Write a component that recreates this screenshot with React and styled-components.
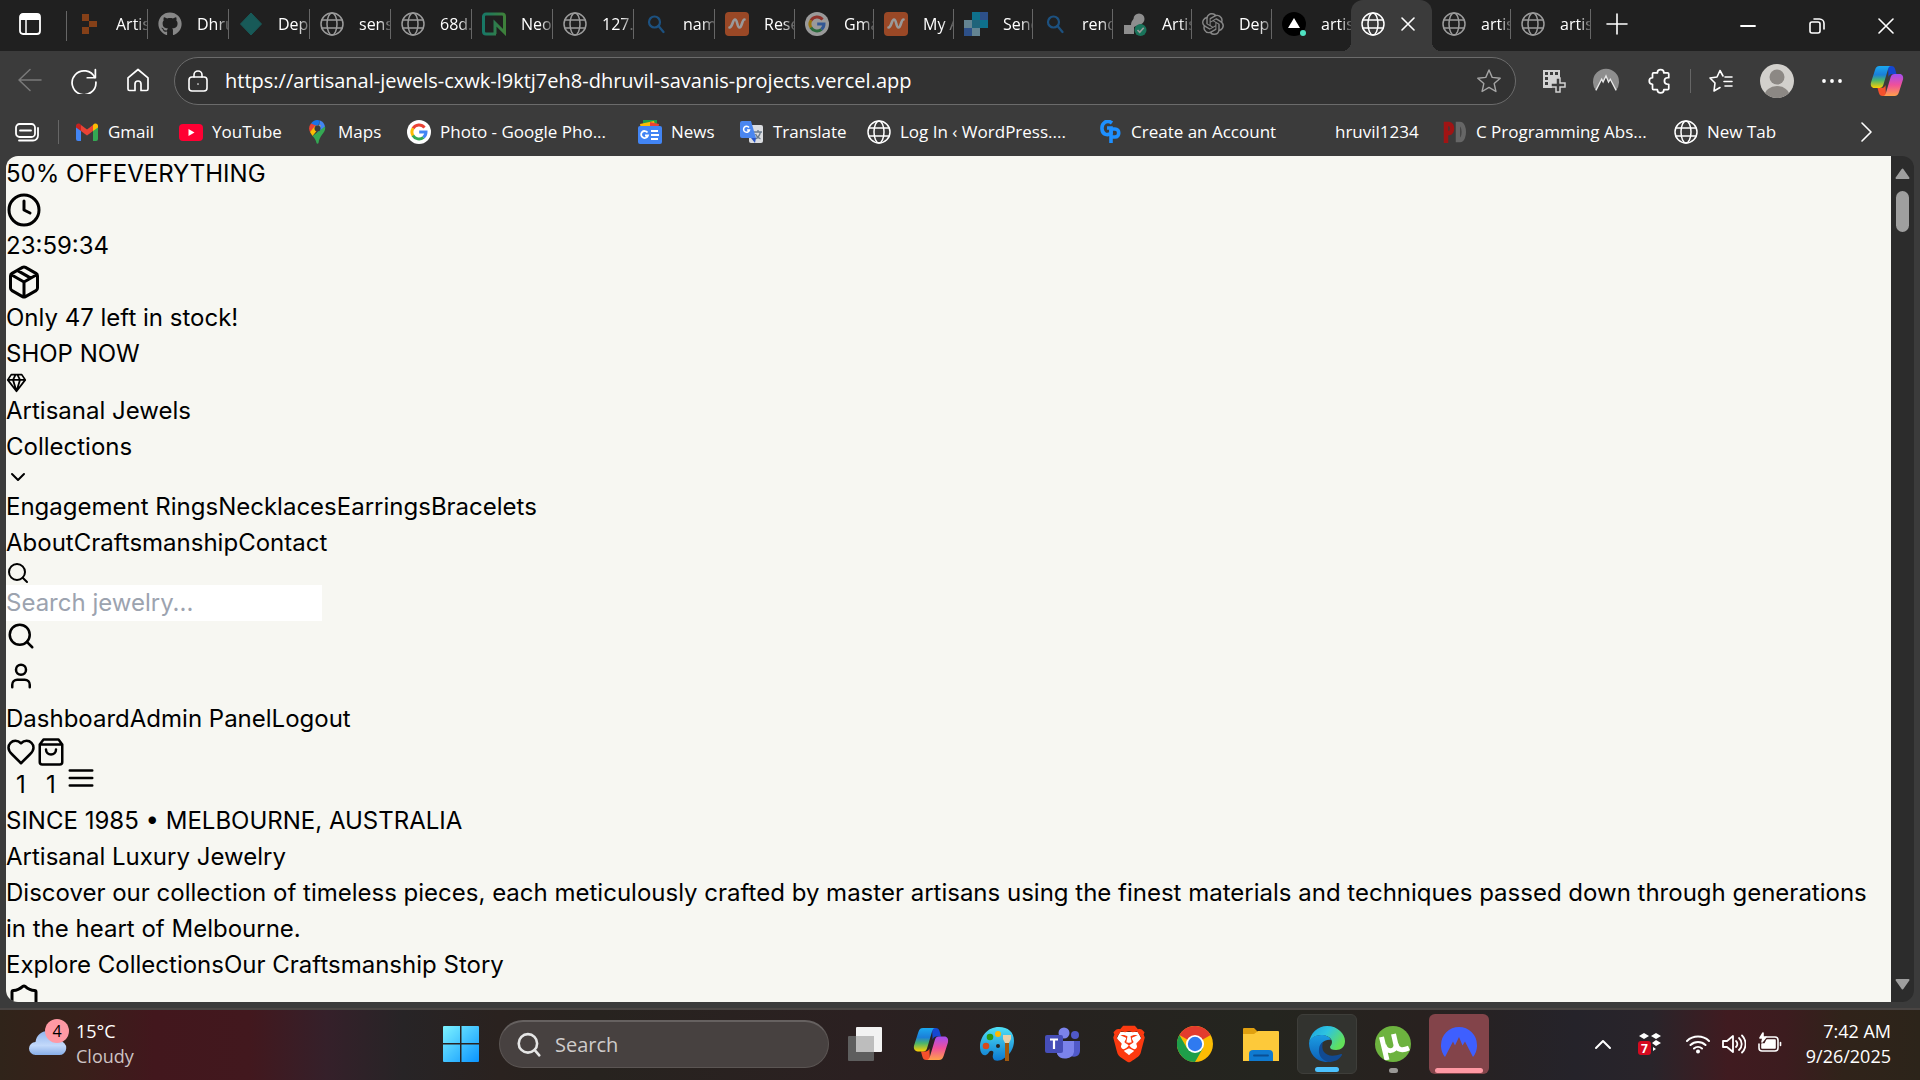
import React from 'react';
import styled, { createGlobalStyle, css } from 'styled-components';
import { FaGithub } from 'react-icons/fa';
import { SiOpenai, SiBrave } from 'react-icons/si';

const GlobalStyle = createGlobalStyle`
  *, *::before, *::after { box-sizing: border-box; }
  body { margin: 0; background: #3b3b3b; font-family: 'Open Sans', 'Noto Sans', sans-serif; }
  button, input { font: inherit; color: inherit; border: 0; padding: 0; margin: 0; background: none; }
  a { color: inherit; text-decoration: none; }
  p, h1 { margin: 0; font: inherit; }
  svg { display: block; flex: none; }
`;

/* ---------- layout ---------- */

const Desktop = styled.div`
  display: flex;
  flex-direction: column;
  height: 100vh;
  overflow: hidden;
`;

const BrowserWindow = styled.div`
  flex: 1;
  min-height: 0;
  display: flex;
  flex-direction: column;
  background: #3b3b3b;
  color: #fff;
`;

const TabBar = styled.div`
  display: flex;
  height: 51px;
  background: #202020;
`;

const TabActions = styled.button`
  width: 66px;
  display: flex;
  align-items: center;
  padding-left: 19px;
  padding-bottom: 3px;
`;

const Separator = styled.span`
  width: 1px;
  height: ${(p) => p.$h}px;
  background: #666;
  flex: none;
`;

const Tab = styled.div`
  width: ${(p) => p.$w}px;
  flex: none;
  display: flex;
  align-items: center;
  padding-left: 10px;
  padding-bottom: 3px;
  > svg { opacity: ${(p) => (p.$bright ? 1 : 0.55)}; }
`;

const TabTitle = styled.button`
  flex: 1;
  min-width: 0;
  height: 24px;
  margin-left: 15px;
  overflow: hidden;
  white-space: nowrap;
  text-align: left;
  font-size: 16px;
  line-height: 24px;
  -webkit-mask-image: linear-gradient(to right, #000 62%, rgba(0, 0, 0, 0.25) 100%);
  mask-image: linear-gradient(to right, #000 62%, rgba(0, 0, 0, 0.25) 100%);
`;

const ActiveTab = styled.div`
  position: relative;
  width: 81px;
  flex: none;
  display: flex;
  align-items: center;
  gap: 16px;
  padding: 0 0 3px 10px;
  background: #3b3b3b;
  border-radius: 12px 12px 0 0;
  &::before, &::after {
    content: '';
    position: absolute;
    bottom: 0;
    width: 9px;
    height: 9px;
  }
  &::before { left: -9px; background: radial-gradient(circle at 0 0, transparent 9px, #3b3b3b 9px); }
  &::after { right: -9px; background: radial-gradient(circle at 100% 0, transparent 9px, #3b3b3b 9px); }
`;

const NewTab = styled.button`
  display: flex;
  align-items: center;
  padding: 0 15px 3px;
`;

const WindowControls = styled.div`
  margin-left: auto;
  display: flex;
  button {
    width: 69px;
    display: flex;
    align-items: center;
    justify-content: center;
  }
`;

const Toolbar = styled.div`
  display: flex;
  align-items: center;
  height: 60px;
  padding: 0 16px 0 15px;
`;

const NavButtons = styled.div`
  display: flex;
  gap: 24px;
  padding-right: 21px;
  button { display: flex; width: 30px; justify-content: center; }
`;

const AddressBar = styled.div`
  flex: 1;
  display: flex;
  align-items: center;
  gap: 16px;
  height: 48px;
  padding: 0 14px 0 12px;
  border: 1px solid #6b6b6b;
  border-radius: 24px;
  background: #323232;
`;

const UrlInput = styled.input`
  flex: 1;
  min-width: 0;
  font-size: 20px;
  line-height: 28px;
  outline: none;
`;

const ToolbarIcons = styled.div`
  display: flex;
  align-items: center;
  gap: 27px;
  padding-left: 26px;
  button { display: flex; }
`;

const IconGroup = styled.div`
  display: flex;
  align-items: center;
  gap: ${(p) => p.$gap}px;
`;

const BookmarkBar = styled.nav`
  display: flex;
  align-items: center;
  height: 45px;
  padding: 0 44px 3px 14px;
  font-size: 17px;
  line-height: 24px;
`;

const Workspaces = styled.button`
  display: flex;
  width: 44px;
`;

const Bookmark = styled.a`
  display: flex;
  align-items: center;
  gap: 9px;
  width: ${(p) => p.$w}px;
  flex: none;
  white-space: nowrap;
`;

const BookmarkIcon = styled.span`
  width: 24px;
  display: flex;
  justify-content: center;
`;

const BookmarkList = styled.div`
  display: flex;
  margin-left: 16px;
`;

const MoreBookmarks = styled.button`
  margin-left: auto;
  display: flex;
`;

/* ---------- page ---------- */

const Viewport = styled.div`
  flex: 1;
  min-height: 0;
  display: flex;
  margin: 0 6px 6px;
  border-radius: 12px;
  overflow: hidden;
`;

const Page = styled.main`
  flex: 1;
  min-width: 0;
  overflow: hidden;
  background: #f7f7f2;
  color: #000;
  font-family: Inter, 'Liberation Sans', sans-serif;
  font-size: 24px;
  line-height: 36px;
`;

const IconRow = styled.div`
  display: flex;
  padding: 10px 0;
`;

const PlainButton = styled.button`
  display: block;
  cursor: pointer;
`;

const SearchInput = styled.input`
  display: block;
  width: 316px;
  height: 36px;
  background: #fff;
  outline: none;
  &::placeholder { color: #9ca3af; opacity: 1; }
`;

const CartRow = styled.div`
  display: flex;
  align-items: baseline;
`;

const CountButton = styled.button`
  width: 30px;
  text-align: center;
`;

const Scrollbar = styled.div`
  width: 23px;
  display: flex;
  flex-direction: column;
  align-items: center;
  padding: 12px 0;
  background: #2c2c2c;
`;

const Thumb = styled.div`
  width: 13px;
  height: 41px;
  margin: 12px 0 auto;
  border-radius: 7px;
  background: #9f9f9f;
`;

/* ---------- taskbar ---------- */

const Taskbar = styled.footer`
  display: grid;
  grid-template-columns: 1fr auto 1fr;
  align-items: center;
  height: 72px;
  padding-bottom: 2px;
  border-top: 2px solid #4a4543;
  color: #fff;
  font-size: 18px;
  line-height: 25px;
  background: linear-gradient(
    to right,
    #30241a 0%, #38201a 4%, #42171d 8%, #42181e 13%, #35202a 17%, #272426 21%, #2a221f 26%, #27231f 31%,
    #2b2021 45%, #26221f 55%, #24251f 66%, #28211f 74%, #25232a 82%, #29242a 86%, #401b20 90%, #3c1c1f 93%, #30231a 96%, #2c241a 100%
  );
`;

const Weather = styled.button`
  display: flex;
  align-items: center;
  gap: 8px;
  padding-left: 28px;
  text-align: left;
`;

const Muted = styled.div`
  color: #cdc3c4;
`;

const CloudWrap = styled.span`
  position: relative;
  display: block;
  width: 40px;
  height: 50px;
`;

const Badge = styled.span`
  position: absolute;
  top: 0;
  right: -1px;
  width: 24px;
  height: 24px;
  border-radius: 50%;
  background: #ff99a4;
  color: #000;
  font-size: 16px;
  line-height: 24px;
  text-align: center;
`;

const Dock = styled.div`
  display: flex;
  align-items: center;
  gap: 6px;
`;

const DockButton = styled.button`
  width: 60px;
  height: 60px;
  display: flex;
  flex-direction: column;
  align-items: center;
  justify-content: center;
  position: relative;
  border-radius: 6px;
  ${(p) => p.$state === 'active' && css`
    background: #32332f;
    border: 1px solid #3e3e3a;
  `}
  ${(p) => p.$state === 'alert' && css`background: #83444a;`}
`;

const Indicator = styled.span`
  position: absolute;
  bottom: 1px;
  width: ${(p) => p.$w}px;
  height: 5px;
  border-radius: 3px;
  background: ${(p) => p.$c};
`;

const SearchBox = styled.label`
  display: flex;
  align-items: center;
  gap: 13px;
  width: 330px;
  height: 48px;
  margin-left: 2px;
  padding: 0 16px;
  border: 1px solid #5b5553;
  border-top: 2px solid #666160;
  border-radius: 24px;
  background: #474140;
  font-size: 20px;
  input { width: 100%; outline: none; }
  input::placeholder { color: #cfcccb; opacity: 1; }
`;

const Tray = styled.div`
  display: flex;
  align-items: center;
  justify-content: flex-end;
  padding-right: 29px;
  > button { display: flex; }
`;

const TrayGroup = styled.button`
  gap: 12px;
  margin: 0 24px;
`;

const Clock = styled.time`
  text-align: right;
`;

/* ---------- icons ---------- */

const Line = ({ size = 24, w = 2, vb = 24, children, color = 'currentColor' }) => (
  <svg width={size} height={size} viewBox={`0 0 ${vb} ${vb}`} fill="none" stroke={color} strokeWidth={w} strokeLinecap="round" strokeLinejoin="round">
    {children}
  </svg>
);

const Globe = () => (
  <Line w={1.5}>
    <circle cx="12" cy="12" r="11" />
    <ellipse cx="12" cy="12" rx="5" ry="11" />
    <path d="M2 8h20M2 16h20" />
  </Line>
);

const GoogleG = () => (
  <svg width="24" height="24" viewBox="0 0 24 24">
    <circle cx="12" cy="12" r="12" fill="#fff" />
    <g fill="none" strokeWidth="3">
      <path d="M17.5 7.6A7 7 0 0 0 6 8.4" stroke="#ea4335" />
      <path d="M6.1 8.2a7 7 0 0 0 0 7.6" stroke="#fbbc04" />
      <path d="M5.9 15.5a7 7 0 0 0 10.6 1.8" stroke="#34a853" />
      <path d="M16.4 17.4A7 7 0 0 0 19 12h-6.8" stroke="#4285f4" />
    </g>
  </svg>
);

const Blocks = () => (
  <svg width="24" height="24" viewBox="0 0 24 24" fill="#d95b12">
    <path d="M5 2h7v7H5zM12 9h8v6h-8zM5 15h7v7H5z" />
  </svg>
);

const Diamond = () => (
  <svg width="24" height="24" viewBox="0 0 24 24"><path d="M12 1 22.5 12 12 23 1.5 12Z" fill="#128a86" stroke="#128a86" strokeLinejoin="round" /></svg>
);

const Neon = () => (
  <svg width="24" height="24" viewBox="0 0 24 24">
    <defs><linearGradient id="neon"><stop offset="0" stopColor="#12c0a0" /><stop offset="1" stopColor="#58d050" /></linearGradient></defs>
    <path d="M14 22H4a2.500 2.500 0 0 1-2.500-2.500v-15A2.500 2.500 0 0 1 4 2h16a2.500 2.500 0 0 1 2.500 2.500V20.500L13 11v11" fill="none" stroke="url(#neon)" strokeWidth="3" />
  </svg>
);

const BlueSearch = () => (
  <Line color="#1a7ad0" w={2.2}><circle cx="10.500" cy="10" r="5.500" /><path d="m14.500 14 5 6" /></Line>
);

const Namecheap = () => (
  <svg width="24" height="24" viewBox="0 0 24 24">
    <rect width="24" height="24" rx="4" fill="#ff6a2c" />
    <path d="M4.500 15.500c3 0 3-8 5.500-8s2 8 4.500 8 2.500-8 5-8" fill="none" stroke="#fff" strokeWidth="2.600" strokeLinecap="round" />
  </svg>
);

const SendGrid = () => (
  <svg width="24" height="24" viewBox="0 0 24 24">
    <path d="M0 8h8v8H0z" fill="#9dd6f0" /><path d="M8 16h8v8H8z" fill="#9dd6f0" /><path d="M0 16h8v8H0z" fill="#3878e0" />
    <path d="M8 0h8v8H8zM16 8h8v8h-8z" fill="#00b3e3" /><path d="M8 8h8v8H8z" fill="#1f9ac4" /><path d="M16 0h8v8h-8z" fill="#3878e0" />
  </svg>
);

const Render = () => (
  <svg width="24" height="24" viewBox="0 0 24 24">
    <circle cx="16" cy="7" r="5.500" fill="#e8e8e8" />
    <path d="M1 22v-9h7c0-3 1-5 4-7l5 6c-1 2-3 1-6 3v7Z" fill="#e8e8e8" />
    <circle cx="17.500" cy="18" r="6" fill="#14b88a" /><path d="m14.500 18 2.200 2.300 4-4.600" fill="none" stroke="#fff" strokeWidth="1.600" />
  </svg>
);

const Vercel = () => (
  <svg width="24" height="24" viewBox="0 0 24 24">
    <circle cx="12" cy="12" r="12" fill="#000" /><path d="m12 6 6 10H6Z" fill="#fff" /><circle cx="21" cy="21" r="3" fill="#50e3c2" />
  </svg>
);

const Copilot = ({ id, size }) => (
  <svg width={size} height={size} viewBox="0 0 34 34">
    <defs>
      <linearGradient id={`${id}a`} x1="0" y1="0" x2="0" y2="1"><stop offset="0" stopColor="#1ba8f0" /><stop offset=".4" stopColor="#1b7fd8" /><stop offset=".65" stopColor="#4bb56c" /><stop offset="1" stopColor="#ffd000" /></linearGradient>
      <linearGradient id={`${id}b`} x1="0" y1="0" x2="0" y2="1"><stop offset="0" stopColor="#a44df0" /><stop offset=".5" stopColor="#f0509a" /><stop offset="1" stopColor="#ffa04a" /></linearGradient>
    </defs>
    <path d="M18 2h3.500c2 0 3 1 3.600 3l1.400 5h-4c-2.500 0-3.500 1.500-4 3Z" fill="#1547d0" />
    <path d="M16 32h-3.500c-2 0-3-1-3.600-3L7.500 24h4c2.500 0 3.500-1.500 4-3Z" fill="#f4502c" />
    <path d="M9.500 2H21c-1.800 0-2.500 1.500-3.200 4l-4.500 15c-.7 2-1.700 3-3.800 3H4.500C1.500 24 .300 21.500 1 18.500L5 6c.8-2.600 2-4 4.500-4Z" fill={`url(#${id}a)`} />
    <path d="M24.500 32H13c1.800 0 2.500-1.500 3.200-4l4.500-15c.7-2 1.700-3 3.800-3h5c3 0 4.200 2.500 3.500 5.500L29 28c-.8 2.600-2 4-4.500 4Z" fill={`url(#${id}b)`} />
  </svg>
);

const Mountain = ({ size, bg, ridge }) => (
  <svg width={size} height={size} viewBox="0 0 36 36">
    <path d="M4 31A18 18 0 0 1 0 19a18 18 0 0 1 36 0 18 18 0 0 1-4 12L24 15.500l-2.500 4L18 11l-4 8.500-2-4Z" fill={bg} />
    {ridge && <path d="M4 31 12 15.500l2 4L18 11l3.500 8.500 2.500-4L32 31" fill="none" stroke={ridge} strokeWidth="1.800" />}
  </svg>
);

const TAB_ITEMS_LEFT = [
  ['Artisan', <Blocks />, 81], ['Dhruv', <FaGithub size={24} color="#dcdcdc" />, 81], ['Depl', <Diamond />, 81],
  ['sensi', <Globe />, 81], ['68d.1', <Globe />, 81], ['Neon', <Neon />, 81], ['127.0', <Globe />, 81],
  ['name', <BlueSearch />, 81], ['Rese', <Namecheap />, 80], ['Gmail', <GoogleG />, 79], ['My A', <Namecheap />, 80],
  ['Send', <SendGrid />, 79], ['rend', <BlueSearch />, 80], ['Artisan', <Render />, 79], ['Depl', <SiOpenai size={22} color="#dcdcdc" />, 80],
  ['artisa', <Vercel />, 79, true],
];
const TAB_ITEMS_RIGHT = [['artisa', <Globe />, 79], ['artisa', <Globe />, 80]];

const renderTab = ([title, icon, w, bare], i) => (
  <Tab key={i} $w={w} $bright={bare}>
    {icon}
    <TabTitle>{title}</TabTitle>
    {!bare && <Separator $h={30} />}
  </Tab>
);

const BOOKMARKS = [
  ['Gmail', 104, (
    <svg width="22" height="18" viewBox="0 0 22 18">
      <path d="M0 3v13a2 2 0 0 0 2 2h3V7Z" fill="#4285f4" /><path d="M22 3v13a2 2 0 0 1-2 2h-3V7Z" fill="#34a853" />
      <path d="m5 2 6 4.500L17 2v6l-6 4.500L5 8Z" fill="#ea4335" /><path d="M0 3c0-2.500 3-3.500 5-1v6L0 4.500Z" fill="#c5221f" /><path d="M22 3c0-2.500-3-3.500-5-1v6l5-3.500Z" fill="#fbbc04" />
    </svg>)],
  ['YouTube', 126, <svg width="24" height="17" viewBox="0 0 24 17"><rect width="24" height="17" rx="4" fill="#f03" /><path d="M9.500 5v7l6-3.500Z" fill="#fff" /></svg>],
  ['Maps', 102, (
    <svg width="17" height="24" viewBox="0 0 17 24">
      <path d="M2 3.500A8 8 0 0 1 11 .5L8.500 8Z" fill="#1a73e8" /><path d="M2 3.500A8 8 0 0 0 1 12l7-6Z" fill="#ea4335" />
      <path d="M11 .5a8.500 8.500 0 0 1 5 6L8 15Z" fill="#4285f4" /><path d="m1 12 2.500 4L12 5.500 6 6Z" fill="#fbbc04" />
      <path d="M16 6.500c1.500 6-5.500 8-6.500 16.500-.3 1-1.700 1-2 0-.5-3-2-5-4-7Z" fill="#34a853" /><circle cx="8.500" cy="8.500" r="3" fill="#3b3b3b" />
    </svg>)],
  ['Photo - Google Pho...', 231, <GoogleG />],
  ['News', 102, (
    <svg width="24" height="24" viewBox="0 0 24 24">
      <path d="M5 0h14v8H5z" fill="#1e9e4a" /><path d="m2 4 14-3 2 8H3Z" fill="#fbbc04" /><path d="m12 2 9 2-1 6h-8Z" fill="#ea4335" /><rect y="6" width="24" height="18" rx="2" fill="#4285f4" />
      <path d="M13 11h7M13 15h8M13 19h7M9.500 12.500A3.500 3.500 0 1 0 10 15.500H7" stroke="#fff" strokeWidth="1.800" fill="none" />
    </svg>)],
  ['Translate', 127, (
    <svg width="24" height="24" viewBox="0 0 24 24">
      <rect x="9" y="5" width="14" height="18" rx="2" fill="#dadce0" /><path d="M14 12h8M18 10v2M20.500 12c-1 4-3 6-5 7M15.500 14c1 3 3 4 5 5" stroke="#6b7b8c" strokeWidth="1.300" fill="none" />
      <path d="M2 1h9l5 17H2a2 2 0 0 1-2-2V3a2 2 0 0 1 2-2Z" fill="#4a86f0" /><path d="m11 18 4 5 1-5Z" fill="#2a56c6" />
      <path d="M9 7.500A3 3 0 1 0 9.500 10H7" stroke="#fff" strokeWidth="1.500" fill="none" />
    </svg>)],
  ['Log In ‹ WordPress....', 231, <Globe />],
  ['Create an Account', 204, (
    <svg width="24" height="24" viewBox="0 0 24 24" fill="none" stroke="#1e90ff" strokeWidth="3.600">
      <path d="M14 3C9-1 3.500 3 4 9s6 7 9 4V8H9" /><path d="M13 23V9h4c5 0 5 8 0 8h-3" />
    </svg>)],
  ['hruvil1234', 141, null],
  ['C Programming Abs...', 231, (
    <svg width="24" height="24" viewBox="0 0 24 24" fill="none" strokeWidth="4.500">
      <path d="M3 23V4h3c4 0 4 9 0 9H3" stroke="#a01414" /><path d="M15 4v16h2c5 0 5-16 0-16Z" stroke="#666" />
    </svg>)],
  ['New Tab', 110, <Globe />],
];

const WindowsLogo = () => (
  <svg width="36" height="36" viewBox="0 0 36 36">
    <defs><linearGradient id="win" x1="0" y1="0" x2="36" y2="36" gradientUnits="userSpaceOnUse"><stop offset="0" stopColor="#7df3ff" /><stop offset="1" stopColor="#0a94ff" /></linearGradient></defs>
    <path d="M1 0h16v17H0V1a1 1 0 0 1 1-1ZM18.500 0H35a1 1 0 0 1 1 1v16H18.500ZM0 18.500h17V36H1a1 1 0 0 1-1-1ZM18.500 18.500H36V35a1 1 0 0 1-1 1H18.500Z" fill="url(#win)" />
  </svg>
);

const TaskView = () => (
  <svg width="36" height="36" viewBox="0 0 36 36">
    <rect x="9" y="1" width="26" height="25" rx="1" fill="#f2f2f2" /><rect x="1" y="10" width="26" height="25" rx="1" fill="#5e5e5e" /><path d="M9 10h18v16H9z" fill="#bdbdbd" />
  </svg>
);

const Paint = () => (
  <svg width="36" height="36" viewBox="0 0 36 36">
    <defs><linearGradient id="pnt" x1="0" y1="0" x2="0" y2="1"><stop offset="0" stopColor="#4fe0f5" /><stop offset="1" stopColor="#0b78d0" /></linearGradient></defs>
    <path d="M20 1C8 1 1 11 1 21c0 6 3 9 6 8 3-1 3-5 6-4 3 0 0 4 1 7 1 4 7 3 10 1 7-4 11-11 11-18C35 6 29 1 20 1Z" fill="url(#pnt)" />
    <circle cx="19" cy="8" r="3" fill="#ffb900" /><circle cx="11" cy="11" r="3.300" fill="#2a9a16" /><circle cx="7" cy="20" r="3.300" fill="#d84a1c" /><circle cx="19" cy="20" r="2" fill="#27231f" />
    <path d="M26 16h4v19h-4z" fill="#a05a10" /><path d="M24 9h8v4l-2 4h-4l-2-4Z" fill="#e8cfa8" />
  </svg>
);

const Teams = () => (
  <svg width="36" height="36" viewBox="0 0 36 36">
    <circle cx="30" cy="9" r="4" fill="#5059c9" /><path d="M26 15h9v10a6 6 0 0 1-9 5Z" fill="#5059c9" />
    <circle cx="19" cy="7" r="5.500" fill="#7b83eb" /><path d="M12 15h17v11a9 8 0 0 1-17 2Z" fill="#7b83eb" />
    <rect y="9" width="18" height="18" rx="2" fill="#464eb8" /><path d="M5 13.500h8M9 13.500V23" stroke="#fff" strokeWidth="2.200" />
  </svg>
);

const Brave = () => (
  <svg width="36" height="38" viewBox="0 0 36 38">
    <path d="M9 7h18l3 6-4 16-8 6-8-6-4-16Z" fill="#fff" />
    <SiBrave size={37} color="#fb3a10" x={-0.5} y={0.5} />
  </svg>
);

const Chrome = () => (
  <svg width="36" height="36" viewBox="0 0 36 36">
    <circle cx="18" cy="18" r="18" fill="#fbbc04" />
    <path d="M18 18 2.400 9A18 18 0 0 1 33.600 9Z" fill="#e33b2e" />
    <path d="M2.400 9A18 18 0 0 0 18 36l7.800-13.500L18 18l-7.800 4.500Z" fill="#1e9e4a" />
    <circle cx="18" cy="18" r="9" fill="#fff" /><circle cx="18" cy="18" r="7.200" fill="#2f7af0" />
  </svg>
);

const Folder = () => (
  <svg width="36" height="36" viewBox="0 0 36 36">
    <path d="M0 3a1 1 0 0 1 1-1h10l4 4H35v8H0Z" fill="#e0a010" /><path d="M0 8h11l4-3h20a1 1 0 0 1 1 1v29H0Z" fill="#fdc93a" />
    <path d="M6 35V28a4 4 0 0 1 4-4h16a4 4 0 0 1 4 4v7Z" fill="#0f7ad0" /><path d="M11 29.500h14" stroke="#0a4f94" strokeWidth="1.800" strokeLinecap="round" />
  </svg>
);

const Edge = () => (
  <svg width="36" height="36" viewBox="0 0 36 36">
    <defs>
      <linearGradient id="edt" x1="0" y1="0" x2="1" y2=".5"><stop offset="0" stopColor="#1aa0e0" /><stop offset=".5" stopColor="#2ec4e0" /><stop offset="1" stopColor="#62e05a" /></linearGradient>
      <linearGradient id="edb" x1="0" y1="0" x2="0" y2="1"><stop offset="0" stopColor="#1b9de2" /><stop offset="1" stopColor="#0d5fb8" /></linearGradient>
    </defs>
    <path d="M0 17C1 7 9 0 18 0c11 0 18 8 18 15 0 6-4 9-9 9-4 0-6-1-6-3 0-1 2-2 2-5 0-4-5-7-11-7C6 9 1 13 0 17Z" fill="url(#edt)" />
    <path d="M0 17C1 12 6 9 12 9c5 0 9 2 10 5-6-1-11 3-11 9 0 6 4 11 9 13C9 37 0 29 0 17Z" fill="url(#edb)" />
    <path d="M14 16c-3 10 4 17 18 12 1 0 1 0 1 1-3 5-8 7-13 7-6-1-11-6-10-13 0-3 2-6 4-7Z" fill="#114a92" />
  </svg>
);

const UTorrent = () => (
  <svg width="36" height="36" viewBox="0 0 36 36">
    <defs><clipPath id="utc"><circle cx="18" cy="18" r="18" /></clipPath></defs>
    <circle cx="18" cy="18" r="18" fill="#6db33f" />
    <path d="m6.500 11 5.500 23M9 19c2 8 12 7 12 0L18.500 8M21 18c1 6 6 7 13 4" fill="none" stroke="#fff" strokeWidth="5" clipPath="url(#utc)" />
  </svg>
);

const DOCK = [
  ['Task view', <TaskView />], ['Copilot', <Copilot id="dock" size={36} />], ['Paint', <Paint />], ['Teams', <Teams />], ['Brave', <Brave />],
  ['Chrome', <Chrome />], ['File Explorer', <Folder />], ['Edge', <Edge />, 'active', 24, '#4cc2ff'], ['uTorrent', <UTorrent />, '', 9, '#9a9896'],
  ['NordVPN', <Mountain size={36} bg="#3e5fff" />, 'alert', 48, '#ff99a4'],
];

const SearchPath = () => (<><circle cx="11" cy="11" r="8" /><path d="m21 21-4.300-4.300" /></>);

export default function App() {
  return (
    <Desktop>
      <GlobalStyle />
      <BrowserWindow>
        <TabBar>
          <TabActions aria-label="Tab actions">
            <svg width="22" height="22" viewBox="0 0 22 22"><rect x="1" y="1" width="20" height="20" rx="3" fill="none" stroke="#fff" strokeWidth="1.800" /><path d="M1 3a2 2 0 0 1 2-2h16a2 2 0 0 1 2 2v4H1Z" fill="#fff" /><path d="M7 7v14" stroke="#fff" strokeWidth="1.500" /></svg>
          </TabActions>
          <IconGroup $gap={0}><Separator $h={30} /></IconGroup>
          {TAB_ITEMS_LEFT.map(renderTab)}
          <ActiveTab>
            <Globe />
            <button aria-label="Close tab"><Line size={14} vb={14} w={1.6}><path d="m1 1 12 12M13 1 1 13" /></Line></button>
          </ActiveTab>
          {TAB_ITEMS_RIGHT.map(renderTab)}
          <NewTab aria-label="New tab"><Line size={22} vb={22} w={1.6}><path d="M11 1v20M1 11h20" /></Line></NewTab>
          <WindowControls>
            <button aria-label="Minimize"><Line size={16} vb={16} w={1.8}><path d="M1 8h14" /></Line></button>
            <button aria-label="Restore"><Line size={16} vb={16} w={1.6}><rect x="1" y="4" width="10" height="11" rx="2" /><path d="M5 1h5.500a4.500 4.500 0 0 1 4.500 4.500V11" /></Line></button>
            <button aria-label="Close"><Line size={16} vb={16} w={1.6}><path d="m1 1 14 14M15 1 1 15" /></Line></button>
          </WindowControls>
        </TabBar>

        <Toolbar>
          <NavButtons>
            <button aria-label="Back"><Line size={24} w={1.5} color="#7a7a7a"><path d="M23 12H1M12 1.500 1 12l11 10.500" /></Line></button>
            <button aria-label="Refresh"><Line size={26} w={1.6}><path d="M22 9a11 11 0 1 0 1 4M22.500 1.500V9H15" /></Line></button>
            <button aria-label="Home"><Line size={24} w={1.7}><path d="M2 9.800 12 1.500l10 8.300V21a1.500 1.500 0 0 1-1.500 1.500H15V16a3 3 0 0 0-6 0v6.500H3.500A1.500 1.500 0 0 1 2 21Z" /></Line></button>
          </NavButtons>
          <AddressBar>
            <Line size={22} w={1.6} vb={22}><rect x="2" y="7" width="18" height="14" rx="3" /><path d="M7 7V5a4 4 0 0 1 8 0v2M11 14v.1" /></Line>
            <UrlInput aria-label="Address" defaultValue="https://artisanal-jewels-cxwk-l9ktj7eh8-dhruvil-savanis-projects.vercel.app" />
            <Line size={24} w={1.4} color="#a5a5a5"><path d="m12 1 3.200 7.400 8 .8-6 5.400 1.700 7.900L12 18.400l-6.900 4.100 1.700-7.900-6-5.400 8-.8Z" /></Line>
          </AddressBar>
          <ToolbarIcons>
            <button aria-label="Capture">
              <svg width="24" height="24" viewBox="0 0 24 24"><path d="M1 1h17v9h-4v4h-4v5H1Z" fill="#d2d2d2" /><path d="M3 3h3v3H3zM8 3h3v3H8zM13 3h3v3h-3zM3 8h3v3H3zM3 13h3v3H3z" fill="#3b3b3b" /><path d="M14 9h4v5h5v4h-5v5h-4v-5H9v-4h5Z" fill="#3b3b3b" stroke="#d2d2d2" strokeWidth="1.500" /></svg>
            </button>
            <button aria-label="VPN extension"><Mountain size={26} bg="#8e8e8e" ridge="#e8e8e8" /></button>
            <IconGroup $gap={18}>
              <button aria-label="Extensions">
                <Line size={26} w={1.6}><path d="M7 4.500h3.500a3 3 0 0 1 6 0H20a1 1 0 0 1 1 1V9h-1a3 3 0 0 0 0 6h1v4a1 1 0 0 1-1 1h-3.500a3 3 0 0 1-6 0H7a1 1 0 0 1-1-1v-4a3 3 0 0 1 0-6V5.500a1 1 0 0 1 1-1Z" /></Line>
              </button>
              <Separator $h={24} />
              <button aria-label="Favorites"><Line size={24} w={1.6}><path d="M16 8h7M15 12.500h8M16 17h7M14 7 11 1.500 8 8 1 9l5 5-1 8 6-3.500" /></Line></button>
            </IconGroup>
            <IconGroup $gap={28}>
              <button aria-label="Profile"><svg width="34" height="34" viewBox="0 0 34 34"><defs><clipPath id="av"><circle cx="17" cy="17" r="17" /></clipPath></defs><g clipPath="url(#av)"><path d="M0 0h34v34H0z" fill="#d2d0cc" /><circle cx="17" cy="13" r="7.500" fill="#8c8884" /><ellipse cx="17" cy="32" rx="12.500" ry="10" fill="#8c8884" /></g></svg></button>
              <button aria-label="More"><svg width="20" height="4" viewBox="0 0 20 4" fill="#fff"><circle cx="2" cy="2" r="1.900" /><circle cx="10" cy="2" r="1.900" /><circle cx="18" cy="2" r="1.900" /></svg></button>
              <button aria-label="Copilot"><Copilot id="side" size={34} /></button>
            </IconGroup>
          </ToolbarIcons>
        </Toolbar>

        <BookmarkBar>
          <Workspaces aria-label="Workspaces"><Line size={26} vb={26} w={1.8}><rect x="2" y="5" width="19" height="13" rx="3.500" /><path d="M6 11.500h11M5 21.500h14a5 5 0 0 0 5-5V9" /></Line></Workspaces>
          <Separator $h={24} />
          <BookmarkList>
            {BOOKMARKS.map(([name, w, icon]) => (
              <Bookmark key={name} $w={w} href="#"><BookmarkIcon>{icon}</BookmarkIcon>{name}</Bookmark>
            ))}
          </BookmarkList>
          <MoreBookmarks aria-label="More bookmarks"><Line size={20} vb={20} w={1.6}><path d="m6 1 9 9-9 9" /></Line></MoreBookmarks>
        </BookmarkBar>

        <Viewport>
          <Page>
            <div><span>50% OFF</span><span>EVERYTHING</span></div>
            <Line size={36}><circle cx="12" cy="12" r="10" /><path d="M12 6v6l4 2" /></Line>
            <div>23:59:34</div>
            <Line size={36}><path d="m7.500 4.270 9 5.150M21 8a2 2 0 0 0-1-1.730l-7-4a2 2 0 0 0-2 0l-7 4A2 2 0 0 0 3 8v8a2 2 0 0 0 1 1.730l7 4a2 2 0 0 0 2 0l7-4A2 2 0 0 0 21 16ZM3.300 7l8.700 5 8.700-5M12 22V12" /></Line>
            <div>Only 47 left in stock!</div>
            <PlainButton>SHOP NOW</PlainButton>
            <Line size={21}><path d="M6 3h12l4 6-10 13L2 9ZM11 3 8 9l4 13 4-13-3-6M2 9h20" /></Line>
            <div>Artisanal Jewels</div>
            <PlainButton>Collections<Line size={24}><path d="m6 9 6 6 6-6" /></Line></PlainButton>
            <div><a href="#rings">Engagement Rings</a><a href="#necklaces">Necklaces</a><a href="#earrings">Earrings</a><a href="#bracelets">Bracelets</a></div>
            <div><a href="#about">About</a><a href="#craft">Craftsmanship</a><a href="#contact">Contact</a></div>
            <Line size={24}><SearchPath /></Line>
            <SearchInput type="text" aria-label="Search jewelry" placeholder="Search jewelry..." />
            <PlainButton aria-label="Search"><Line size={30}><SearchPath /></Line></PlainButton>
            <IconRow><PlainButton aria-label="Account"><Line size={30}><path d="M19 21v-2a4 4 0 0 0-4-4H9a4 4 0 0 0-4 4v2" /><circle cx="12" cy="7" r="4" /></Line></PlainButton></IconRow>
            <div><a href="#dashboard">Dashboard</a><a href="#admin">Admin Panel</a><a href="#logout">Logout</a></div>
            <CartRow>
              <CountButton aria-label="Wishlist, 1 item"><Line size={30}><path d="M19 14c1.490-1.460 3-3.210 3-5.500A5.500 5.500 0 0 0 16.500 3c-1.760 0-3 .5-4.500 2-1.500-1.500-2.740-2-4.500-2A5.500 5.500 0 0 0 2 8.500c0 2.300 1.500 4.050 3 5.500l7 7Z" /></Line>1</CountButton>
              <CountButton aria-label="Bag, 1 item"><Line size={30}><path d="M6 2 3 6v14a2 2 0 0 0 2 2h14a2 2 0 0 0 2-2V6l-3-4ZM3 6h18M16 10a4 4 0 0 1-8 0" /></Line>1</CountButton>
              <button aria-label="Menu"><Line size={30}><path d="M3 6h18M3 12h18M3 18h18" /></Line></button>
            </CartRow>
            <div>SINCE 1985 • MELBOURNE, AUSTRALIA</div>
            <h1>Artisanal Luxury Jewelry</h1>
            <p>Discover our collection of timeless pieces, each meticulously crafted by master artisans using the finest materials and techniques passed down through generations in the heart of Melbourne.</p>
            <div><a href="#collections">Explore Collections</a><a href="#story">Our Craftsmanship Story</a></div>
            <Line size={36}><path d="M20 13c0 5-3.500 7.500-7.660 8.950a1 1 0 0 1-.670-.010C7.500 20.500 4 18 4 13V6a1 1 0 0 1 1-1c2 0 4.500-1.200 6.240-2.720a1.170 1.170 0 0 1 1.520 0C14.510 3.810 17 5 19 5a1 1 0 0 1 1 1z" /></Line>
          </Page>
          <Scrollbar>
            <svg width="15" height="11" viewBox="0 0 15 11"><path d="M7.500 1.500 13.500 10h-12Z" fill="#9f9f9f" stroke="#9f9f9f" strokeWidth="2" strokeLinejoin="round" /></svg>
            <Thumb />
            <svg width="15" height="11" viewBox="0 0 15 11"><path d="M7.500 9.500 1.500 1h12Z" fill="#9f9f9f" stroke="#9f9f9f" strokeWidth="2" strokeLinejoin="round" /></svg>
          </Scrollbar>
        </Viewport>
      </BrowserWindow>

      <Taskbar>
        <Weather>
          <CloudWrap>
            <svg width="40" height="46" viewBox="0 0 40 46"><defs><linearGradient id="cld" x1="0" y1="0" x2="0" y2="1"><stop offset="0" stopColor="#8fb4ee" /><stop offset=".6" stopColor="#c3d9fa" /><stop offset="1" stopColor="#88aee8" /></linearGradient></defs><path d="M7.500 36a6.500 6.500 0 0 1 0-13c1-7 6-11 12-11s11 4 12 10a7 7 0 0 1-.5 14Z" fill="url(#cld)" /></svg>
            <Badge>4</Badge>
          </CloudWrap>
          <div><div>15°C</div><Muted>Cloudy</Muted></div>
        </Weather>
        <Dock>
          <DockButton aria-label="Start"><WindowsLogo /></DockButton>
          <SearchBox>
            <Line size={26} w={2.4} color="#e6e6e6"><circle cx="11" cy="10.500" r="8.500" /><path d="m17.500 17 4 4.500" /></Line>
            <input type="text" aria-label="Search" placeholder="Search" />
          </SearchBox>
          {DOCK.map(([name, icon, state, w, c]) => (
            <DockButton key={name} aria-label={name} $state={state}>{icon}{w && <Indicator $w={w} $c={c} />}</DockButton>
          ))}
        </Dock>
        <Tray>
          <button aria-label="Show hidden icons"><Line size={18} vb={18} w={2}><path d="m2 13 7-7 7 7" /></Line></button>
          <button aria-label="Dropbox">
            <svg width="50" height="26" viewBox="-26 0 50 26"><path d="m6 2 5 3-5 3-5-3ZM18 2l5 3-5 3-5-3ZM18 9l5 3-5 3-4-3ZM15 16l3 2-3 2Z" fill="#fff" /><rect y="10" width="13" height="14" rx="3" fill="#d40a20" /><text x="6.500" y="21.500" fontSize="12" fontWeight="700" fill="#fff" textAnchor="middle">7</text></svg>
          </button>
          <TrayGroup aria-label="Network, sound and battery">
            <Line w={2}><path d="M1 9a16 16 0 0 1 22 0M4.500 13a11 11 0 0 1 15 0M8 16.500a6 6 0 0 1 8 0" /><circle cx="12" cy="19.500" r="1" fill="#fff" /></Line>
            <Line w={1.8}><path d="M1 9h4l6-5v16l-6-5H1ZM14 9a4 4 0 0 1 0 6M17 6a8 8 0 0 1 0 12M20 3.500a12 12 0 0 1 0 17" /></Line>
            <Line w={1.6}><path d="M8 5h9a3 3 0 0 1 3 3v8a3 3 0 0 1-3 3H4a3 3 0 0 1-3-3v-4" /><path d="M9 8h8v8H4v-4h3Z" fill="#fff" /><path d="M22.500 10.500v3M5 1 2 6h3l-1 4 4-5H5Z" fill="#fff" /></Line>
          </TrayGroup>
          <Clock><div>7:42 AM</div><div>9/26/2025</div></Clock>
        </Tray>
      </Taskbar>
    </Desktop>
  );
}
